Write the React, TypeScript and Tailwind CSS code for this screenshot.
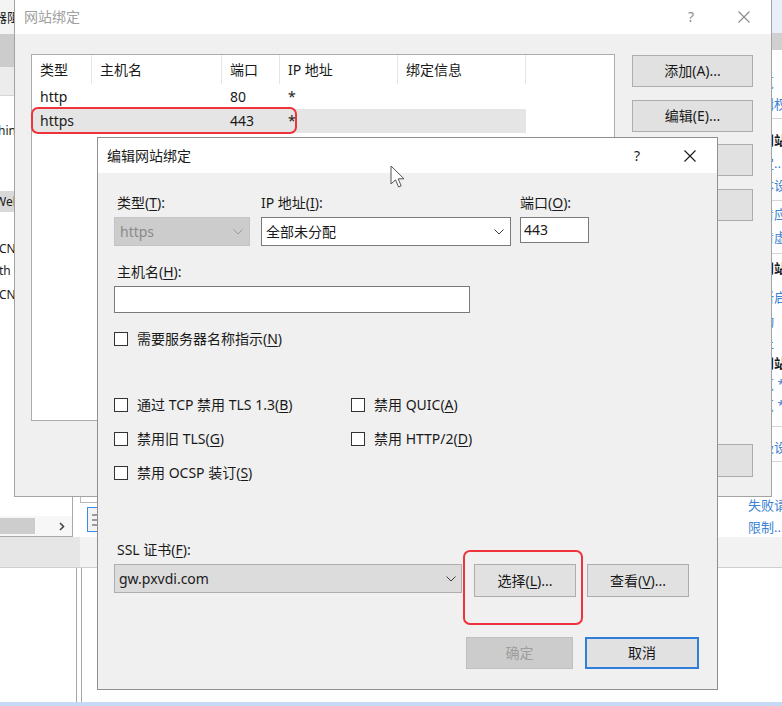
import React from "react";

const U = ({ children }: { children: React.ReactNode }) => (
  <span className="underline underline-offset-[2px] decoration-[1px]">{children}</span>
);

const Chevron = ({ color = "#3c3c3c" }: { color?: string }) => (
  <svg width="10" height="6" viewBox="0 0 10 6" fill="none">
    <path d="M0.5 0.5 L5 5 L9.5 0.5" stroke={color} strokeWidth="1" />
  </svg>
);

const CloseX = ({ color }: { color: string }) => (
  <svg width="12" height="12" viewBox="0 0 12 12" fill="none">
    <path d="M0.5 0.5 L11.5 11.5 M11.5 0.5 L0.5 11.5" stroke={color} strokeWidth="1.1" />
  </svg>
);

const Check = ({ children }: { children: React.ReactNode }) => (
  <div className="flex items-center h-[20px] whitespace-nowrap">
    <div className="w-[14px] h-[14px] border border-[#333333] bg-white shrink-0" />
    <span className="ml-[9px]">{children}</span>
  </div>
);

const Sep = ({ h }: { h: string }) => (
  <div className={`${h} flex items-center`}>
    <div className="h-px w-full bg-[#d6d6d6]" />
  </div>
);

function Background() {
  return (
    <div className="absolute inset-0 flex flex-col text-[12px]">
      <div className="flex h-[537px]">
        {/* connections pane */}
        <div className="w-[73px] flex flex-col border-r border-b border-[#a9a9a9]">
          <div className="h-[34px] bg-[#f4f4f4] flex items-center overflow-hidden">
            <span className="ml-[-6px] whitespace-nowrap text-[13px] text-[#1a1a1a]">器阻</span>
          </div>
          <div className="h-[33px] bg-[#cccccc]" />
          <div className="h-[29px] bg-[#ececec] border-b border-[#d6d6d6]" />
          <div className="flex-1 flex flex-col bg-white overflow-hidden text-[#1a1a1a]">
            <div className="mt-[24px] h-[22px] flex items-center">
              <span className="ml-[-2px] whitespace-nowrap">hin</span>
            </div>
            <div className="mt-[49px] h-[21px] flex items-center bg-[#d9d9d9]">
              <span className="ml-[-5px] whitespace-nowrap">Web</span>
            </div>
            <div className="mt-[26px] h-[22px] flex items-center">
              <span className="ml-[-1px] whitespace-nowrap">CN</span>
            </div>
            <div className="h-[22px] flex items-center">
              <span className="ml-[-1px] whitespace-nowrap">th</span>
            </div>
            <div className="mt-[2px] h-[22px] flex items-center">
              <span className="ml-[-1px] whitespace-nowrap">CN</span>
            </div>
          </div>
          <div className="h-[20px] flex items-center bg-[#f7f7f7]">
            <div className="w-[35px] h-[16px] bg-[#cdcdcd]" />
            <div className="flex-1" />
            <svg width="6" height="9" viewBox="0 0 6 9" className="mr-[7px]" fill="none">
              <path d="M1 1 L4.5 4.5 L1 8" stroke="#444" strokeWidth="1.6" />
            </svg>
          </div>
        </div>
        {/* center pane */}
        <div className="flex-1 flex flex-col bg-white">
          <div className="flex-1" />
          <div className="h-[40px] flex flex-col pl-[7px]">
            <div className="h-[6px] w-[60px] border-l border-b border-[#b9b9b9]" />
            <div className="ml-[7px] mt-[4px] w-[24px] h-[25px] border border-[#3c8ce6] bg-[#f3f3f3] flex flex-col items-center justify-center gap-[3px]">
              <div className="w-[14px] h-[2px] bg-[#9a9a9a]" />
              <div className="w-[14px] h-[2px] bg-[#9a9a9a]" />
              <div className="w-[14px] h-[2px] bg-[#9a9a9a]" />
            </div>
          </div>
        </div>
        {/* actions pane */}
        <div className="w-[62px] flex flex-col bg-white overflow-hidden whitespace-nowrap text-[13px] text-[#3a82d4]">
          <div className="h-[33px] bg-[#e9eff8]" />
          <div className="h-[17px] bg-[#d0d0d0]" />
          <div className="h-[21px]" />
          <div className="h-[22px] flex items-center pl-[28px]">浏览</div>
          <div className="h-[21px] flex items-center pl-[28px]">编辑权限...</div>
          <Sep h="h-[8px]" />
          <div className="h-[7px]" />
          <div className="h-[22px] flex items-center pl-[15px] font-bold text-[#1a1a1a]">编辑网站</div>
          <div className="h-[23px] flex items-center pl-[28px]">绑定...</div>
          <div className="h-[22px] flex items-center pl-[28px]">基本设置...</div>
          <Sep h="h-[8px]" />
          <div className="h-[20px] flex items-center pl-[28px]">查看应用程序</div>
          <div className="h-[26px] flex items-center pl-[28px]">查看虚拟目录</div>
          <Sep h="h-[6px]" />
          <div className="h-[23px] flex items-center pl-[15px] font-bold text-[#1a1a1a]">管理网站</div>
          <div className="h-[6px]" />
          <div className="h-[24px] flex items-center pl-[28px]">重新启动</div>
          <div className="h-[24px] flex items-center pl-[28px]">启动</div>
          <div className="h-[20px] flex items-center pl-[28px]">停止</div>
          <div className="h-[20px] flex items-center pl-[15px] font-bold text-[#1a1a1a]">浏览网站</div>
          <div className="h-[21px] flex items-center pl-[28px]">浏览 *:80 (http)</div>
          <div className="h-[22px] flex items-center pl-[28px]">浏览 *:443 (https)</div>
          <Sep h="h-[20px]" />
          <div className="h-[22px] flex items-center pl-[28px]">高级设置...</div>
          <Sep h="h-[6px]" />
          <div className="h-[22px] flex items-center pl-[15px] font-bold text-[#1a1a1a]">配置</div>
          <div className="h-[8px]" />
          <div className="h-[22px] flex items-center pl-[28px]">失败请求跟踪...</div>
          <div className="h-[21px] flex items-center pl-[28px]">限制...</div>
        </div>
      </div>
      <div className="h-[31px] flex border-b border-[#cfcfcf]">
        <div className="w-[80px] bg-[#e6e6e6]" />
        <div className="flex-1 bg-[#f2f2f2]" />
      </div>
      <div className="flex-1 flex bg-white">
        <div className="w-[76px]" />
        <div className="w-[6px] border-x border-[#a6a6a6]" />
        <div className="flex-1" />
      </div>
      <div className="h-[4px] bg-[#c6d9f5]" />
    </div>
  );
}

function OuterDialog() {
  const cols = ["w-[60px]", "w-[130px]", "w-[58px]", "w-[118px]", "w-[128px]"];
  const heads = ["类型", "主机名", "端口", "IP 地址", "绑定信息"];
  const rows = [
    ["http", "", "80", "*", ""],
    ["https", "", "443", "*", ""],
  ];
  return (
    <div className="absolute left-[14px] top-0 w-[758px] h-[497px] flex flex-col bg-[#f0f0f0] border-x border-b border-[#a3a3a3]">
      <div className="h-[34px] bg-white flex items-center pl-[9px] pr-[4px] shrink-0">
        <span className="text-[#a0a0a0]">网站绑定</span>
        <div className="flex-1" />
        <div className="w-[46px] flex justify-center text-[#8c8c8c]">?</div>
        <div className="w-[7px]" />
        <div className="w-[46px] flex justify-center">
          <CloseX color="#8a8a8a" />
        </div>
      </div>
      <div className="flex-1 flex pl-[16px]">
        <div className="mt-[20px] w-[584px] h-[367px] border border-[#adadad] bg-white flex flex-col">
          <div className="h-[30px] flex">
            {heads.map((h, i) => (
              <div key={i} className={`${cols[i]} h-[29px] flex items-center pl-[8px] border-r border-[#e5e5e5]`}>
                {h}
              </div>
            ))}
          </div>
          {rows.map((r, ri) => (
            <div key={ri} className={`h-[24px] flex w-[494px] ${ri === 1 ? "bg-[#e5e5e5]" : ""}`}>
              {r.map((c, ci) => (
                <div key={ci} className={`${cols[ci]} flex items-center pl-[8px]`}>
                  {c}
                </div>
              ))}
            </div>
          ))}
        </div>
        <div className="ml-[17px] mt-[21px] flex flex-col gap-[12.5px]">
          <div className="w-[121px] h-[32px] flex items-center justify-center border border-[#adadad] bg-[#e1e1e1]">添加(A)...</div>
          <div className="w-[121px] h-[32px] flex items-center justify-center border border-[#adadad] bg-[#e1e1e1]">编辑(E)...</div>
          <div className="w-[121px] h-[32px] border border-[#adadad] bg-[#e1e1e1]" />
          <div className="w-[121px] h-[32px] border border-[#adadad] bg-[#e1e1e1]" />
          <div className="mt-[211px] w-[121px] h-[33px] border border-[#adadad] bg-[#e1e1e1]" />
        </div>
      </div>
    </div>
  );
}

function InnerDialog() {
  return (
    <div className="absolute left-[97px] top-[137px] w-[621px] h-[553px] flex flex-col bg-[#f0f0f0] border border-[#8f8f8f]">
      <div className="h-[35px] bg-white flex items-center pl-[9px] pr-[4px] shrink-0">
        <span className="text-[#1a1a1a]">编辑网站绑定</span>
        <div className="flex-1" />
        <div className="w-[46px] flex justify-center text-[#1a1a1a]">?</div>
        <div className="w-[7px]" />
        <div className="w-[46px] flex justify-center">
          <CloseX color="#1a1a1a" />
        </div>
      </div>
      <div className="flex-1 flex flex-col pl-[16px]">
        {/* row 1 */}
        <div className="mt-[20px] flex">
          <div className="w-[136px] flex flex-col">
            <div className="h-[20px] flex items-center pl-[3px]">
              类型(<U>T</U>):
            </div>
            <div className="mt-[4px] h-[29px] bg-[#cccccc] border border-[#c4c4c4] flex items-center pl-[5px] pr-[6px] text-[#8a8a8a]">
              <span>https</span>
              <div className="flex-1" />
              <Chevron color="#9a9a9a" />
            </div>
          </div>
          <div className="ml-[11px] w-[250px] flex flex-col">
            <div className="h-[20px] flex items-center">
              IP 地址(<U>I</U>):
            </div>
            <div className="mt-[4px] h-[29px] bg-white border border-[#7a7a7a] flex items-center pl-[4px] pr-[6px]">
              <span>全部未分配</span>
              <div className="flex-1" />
              <Chevron />
            </div>
          </div>
          <div className="ml-[9px] w-[69px] flex flex-col">
            <div className="h-[20px] flex items-center">
              端口(<U>O</U>):
            </div>
            <div className="mt-[4px] h-[26px] bg-white border border-[#7a7a7a] flex items-center pl-[3px]">
              443
            </div>
          </div>
        </div>
        {/* host */}
        <div className="mt-[16px] h-[20px] flex items-center pl-[3px]">
          主机名(<U>H</U>):
        </div>
        <div className="mt-[4px] w-[356px] h-[27px] bg-white border border-[#7a7a7a]" />
        <div className="mt-[16px]">
          <Check>
            需要服务器名称指示(<U>N</U>)
          </Check>
        </div>
        {/* options grid */}
        <div className="mt-[46px] grid grid-cols-[237px_auto] gap-y-[14px]">
          <Check>
            通过 TCP 禁用 TLS 1.3(<U>B</U>)
          </Check>
          <Check>
            禁用 QUIC(<U>A</U>)
          </Check>
          <Check>
            禁用旧 TLS(<U>G</U>)
          </Check>
          <Check>
            禁用 HTTP/2(<U>D</U>)
          </Check>
          <Check>
            禁用 OCSP 装订(<U>S</U>)
          </Check>
        </div>
        {/* cert */}
        <div className="mt-[57px] h-[20px] flex items-center pl-[3px]">
          SSL 证书(<U>F</U>):
        </div>
        <div className="mt-[4px] flex items-start">
          <div className="w-[348px] h-[29px] bg-[#dcdcdc] border border-[#adadad] flex items-center pl-[4px] pr-[5px]">
            <span>gw.pxvdi.com</span>
            <div className="flex-1" />
            <Chevron />
          </div>
          <div className="ml-[12px] w-[102px] h-[33px] border border-[#adadad] bg-[#e1e1e1] flex items-center justify-center">
            选择(<U>L</U>)...
          </div>
          <div className="ml-[11px] w-[102px] h-[33px] border border-[#adadad] bg-[#e1e1e1] flex items-center justify-center">
            查看(<U>V</U>)...
          </div>
        </div>
        {/* ok / cancel */}
        <div className="mt-[40px] flex justify-end pr-[18px]">
          <div className="w-[107px] h-[32px] border border-[#bfbfbf] bg-[#cccccc] text-[#9d9d9d] flex items-center justify-center">
            确定
          </div>
          <div className="ml-[12px] w-[114px] h-[32px] border-2 border-[#2f7fd8] bg-[#e1e1e1] flex items-center justify-center">
            取消
          </div>
        </div>
      </div>
    </div>
  );
}

export default function App() {
  return (
    <div className="relative w-[782px] h-[706px] overflow-hidden bg-white text-[14px] leading-[20px] text-[#1a1a1a] font-['Noto_Sans','Noto_Sans_CJK_SC',sans-serif]">
      <Background />
      <OuterDialog />
      <InnerDialog />
      {/* annotations */}
      <div className="absolute left-[31px] top-[107px] w-[266px] h-[27px] border-[2.5px] border-[#f0323c] rounded-[7px]" />
      <div className="absolute left-[463px] top-[550px] w-[120px] h-[75px] border-[2.5px] border-[#f0323c] rounded-[7px]" />
      {/* mouse cursor */}
      <svg className="absolute left-[390px] top-[165px]" width="16" height="24" viewBox="0 0 16 24" fill="none">
        <path d="M1 1 L1 19 L5.5 14.8 L8.6 22 L11.2 20.9 L8.2 13.8 L14 13.8 Z" fill="white" stroke="#555" strokeWidth="1" strokeLinejoin="round" />
      </svg>
    </div>
  );
}
